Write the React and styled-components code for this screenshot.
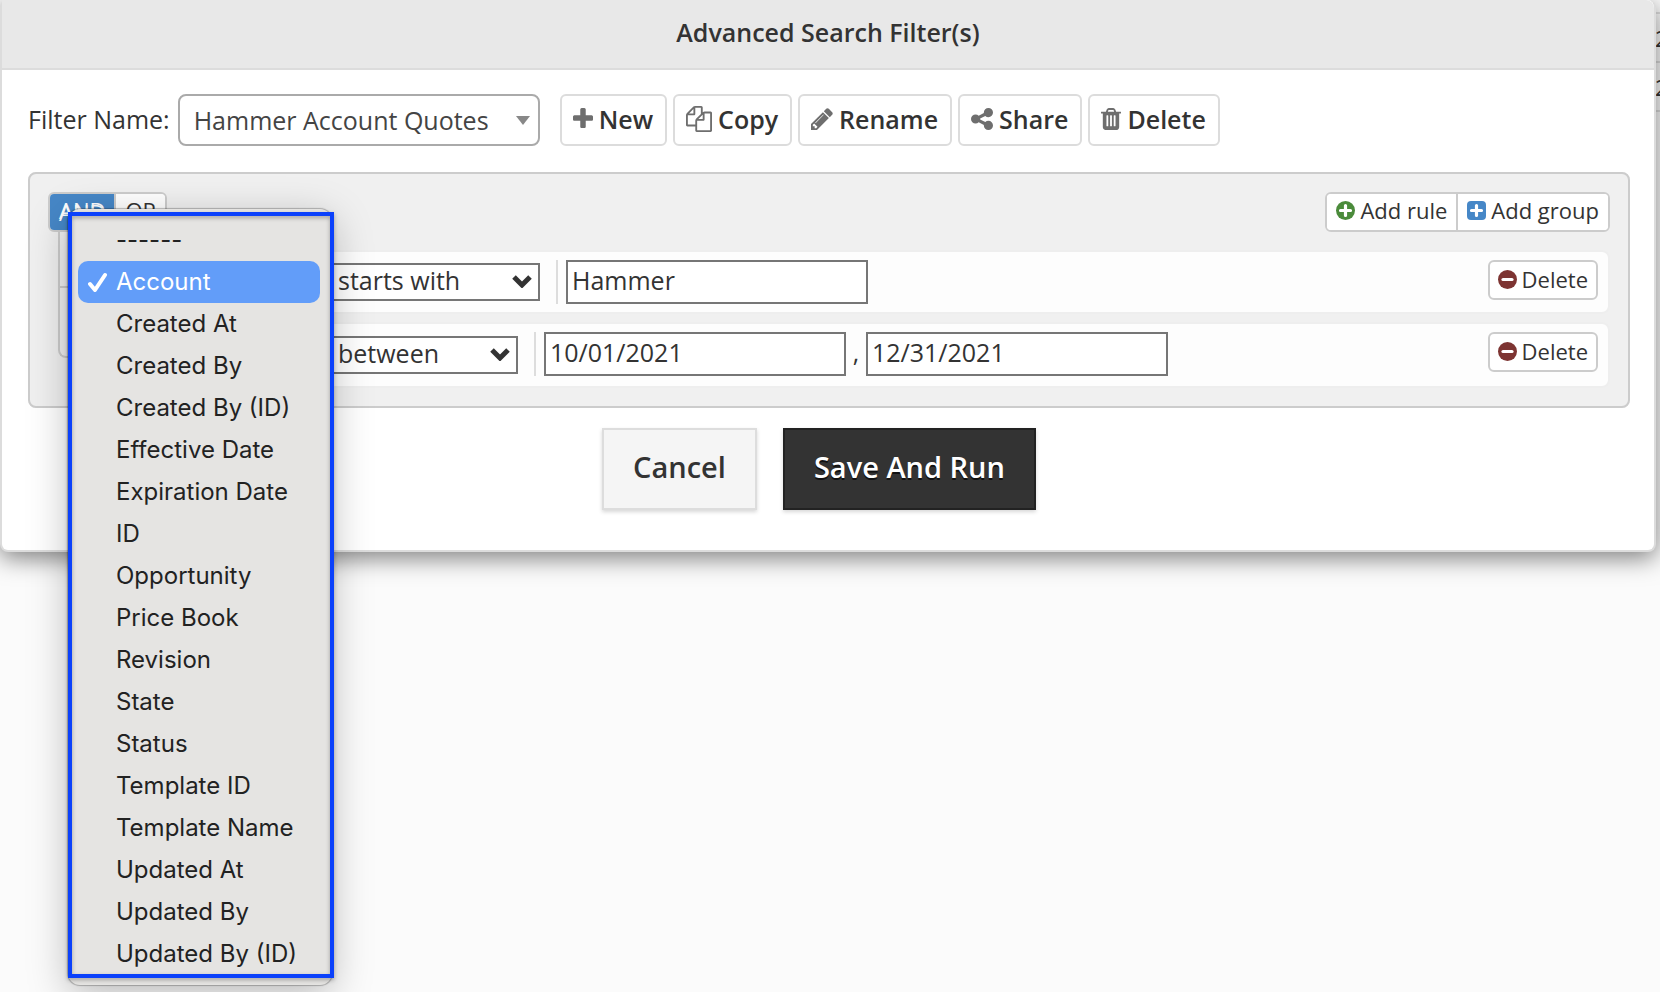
import React from "react";
import styled, { createGlobalStyle, css } from "styled-components";

const GlobalStyle = createGlobalStyle`
  *, *::before, *::after { box-sizing: border-box; }
  body {
    margin: 0;
    background: #fbfbfb;
    color: #333;
    font-family: "Open Sans", "Noto Sans", sans-serif;
    font-size: 25px;
    line-height: 36px;
  }
  button, input, select { font: inherit; color: inherit; margin: 0; }
`;

const Page = styled.div`
  position: relative;
  min-height: 100vh;
  padding-right: 4px;
  overflow: hidden;
`;

const BackgroundColumn = styled.div`
  position: absolute;
  top: 12px;
  left: calc(100% - 5px);
  color: #333;
`;

const BackgroundCell = styled.div`
  height: 49px;
  padding-top: 8px;
  border-top: 2px solid #ddd;
  font-size: 22px;
  line-height: 32px;
`;

const Modal = styled.section`
  position: relative;
  background: #fff;
  border: 2px solid #dcdcdc;
  border-top: 0;
  border-radius: 8px;
  box-shadow: 0 6px 24px rgba(0, 0, 0, 0.5);
`;

const ModalHeader = styled.header`
  height: 70px;
  display: flex;
  align-items: center;
  justify-content: center;
  background: #e8e8e8;
  border-bottom: 2px solid #dcdcdc;
  border-radius: 0 8px 0 0;
  padding-bottom: 4px;
`;

const Title = styled.h1`
  margin: 0;
  font-size: 25px;
  line-height: 36px;
  font-weight: 600;
`;

const ModalBody = styled.div`
  padding: 24px 24px 40px 26px;
`;

const FilterBar = styled.div`
  display: flex;
  gap: 6px;
  margin-bottom: 26px;
`;

const FilterLabel = styled.label`
  padding-top: 7px;
  margin-right: 2px;
  white-space: nowrap;
`;

const SelectFrame = styled.div`
  position: relative;
  width: ${(p) => p.$width}px;
  margin-right: ${(p) => p.$after || 0}px;
  ${(p) => p.$centered && css`align-self: center;`}
`;

const FilterSelect = styled.select`
  appearance: none;
  width: 100%;
  height: 52px;
  padding: 0 40px 0 14px;
  border: 2px solid #aaa;
  border-radius: 8px;
  background: #fff;
  color: #444;
`;

const Caret = styled.svg`
  position: absolute;
  right: 10px;
  top: 22px;
  width: 14px;
  height: 9px;
  fill: #888;
  pointer-events: none;
`;

const ToolButton = styled.button`
  display: flex;
  align-items: flex-start;
  gap: 6px;
  height: 52px;
  padding: 5px 12px 0 11px;
  border: 2px solid #dcdcdc;
  border-radius: 6px;
  background: #fff;
  font-weight: 600;
  white-space: nowrap;
`;

const ToolIcon = styled.svg`
  width: ${(p) => p.$width}px;
  height: 26px;
  margin-top: 5px;
  fill: #6e6e6e;
`;

const RuleGroup = styled.fieldset`
  margin: 0;
  min-width: 0;
  padding: 18px;
  border: 2px solid #ccc;
  border-radius: 8px;
  background: #f0f0f0;
`;

const GroupHeader = styled.div`
  display: flex;
  justify-content: space-between;
  margin-bottom: 18px;
`;

const Segments = styled.div`
  display: flex;
  height: 40px;
  border: 2px solid #ccc;
  border-radius: 6px;
  background: #fff;
  overflow: hidden;
`;

const smallButton = css`
  display: flex;
  align-items: center;
  gap: 5px;
  font-size: 22px;
  line-height: 30px;
  white-space: nowrap;
  background: #fff;
`;

const Segment = styled.button`
  ${smallButton}
  border: 0;
  padding: 0 9px 4px;
  &:not(:first-child) { border-left: 2px solid #ccc; }
  ${(p) => p.$active && css`
    background: #4687c7;
    color: #fff;
    text-shadow: 0 2px 0 #fff;
  `}
`;

const RuleButton = styled.button`
  ${smallButton}
  height: 40px;
  margin-left: auto;
  padding: 0 8px 2px;
  border: 2px solid #ccc;
  border-radius: 6px;
`;

const SmallIcon = styled.svg`
  width: 19px;
  height: 19px;
`;

const RuleList = styled.ul`
  list-style: none;
  margin: 0;
  padding: 0 0 0 30px;
  display: flex;
  flex-direction: column;
  gap: 8px;
`;

const Rule = styled.li`
  position: relative;
  display: flex;
  align-items: flex-start;
  min-height: ${(p) => p.$height}px;
  padding: 8px 10px;
  border: 2px solid #eee;
  border-radius: 8px;
  background: #fdfdfd;

  &::before {
    content: "";
    position: absolute;
    left: -22px;
    top: -20px;
    width: 20px;
    height: calc(50% + 26px);
    border: solid #ccc;
    border-width: 0 0 2px 2px;
  }
  &:not(:first-child)::before {
    top: -36px;
    height: calc(50% + 39px);
    border-bottom-left-radius: 8px;
  }
`;

const RuleSelect = styled.select`
  appearance: none;
  display: block;
  width: 100%;
  height: 38px;
  padding: 0 36px 4px 8px;
  border: 2px solid #767676;
  border-radius: 0;
  background: #fff;
  line-height: 30px;
`;

const Chevron = styled.svg`
  position: absolute;
  right: 8px;
  top: 11px;
  width: 20px;
  height: 14px;
  fill: none;
  stroke: #333;
  stroke-width: 5;
  pointer-events: none;
`;

const ValueGroup = styled.div`
  display: flex;
  height: 44px;
  padding-left: 8px;
  border-left: 2px solid #ddd;
`;

const ValueInput = styled.input`
  width: 302px;
  height: 44px;
  padding: 0 4px 4px;
  border: 2px solid #767676;
  border-radius: 0;
  background: #fff;
`;

const Separator = styled.span`
  width: 20px;
  padding-top: 2px;
  text-align: center;
`;

const Actions = styled.footer`
  display: flex;
  justify-content: center;
  gap: 26px;
  padding: 20px 20px 0 0;
`;

const ActionButton = styled.button`
  height: 82px;
  padding: 0 29px 4px;
  border: 2px solid ${(p) => (p.$primary ? "#222" : "#ddd")};
  background: ${(p) => (p.$primary ? "#333" : "#f5f5f5")};
  color: ${(p) => (p.$primary ? "#fff" : "#333")};
  font-size: 29px;
  font-weight: 600;
  text-shadow: ${(p) => (p.$primary ? "0 2px 0 #111" : "none")};
  box-shadow: 0 2px 4px rgba(0, 0, 0, 0.16);
`;

const Menu = styled.ul`
  position: absolute;
  z-index: 2;
  top: -54px;
  left: -22px;
  width: 264px;
  margin: 0;
  padding: 10px 12px 10px 10px;
  list-style: none;
  border-radius: 12px;
  background: #e5e4e2;
  box-shadow: 0 0 1px 1px rgba(0, 0, 0, 0.25), 0 10px 40px rgba(0, 0, 0, 0.26);
  font-family: Inter, "Liberation Sans", sans-serif;
  font-size: 24px;
  line-height: 42px;
  color: #222;
`;

const MenuItem = styled.li`
  display: flex;
  align-items: center;
  height: 42px;
  padding-left: 38px;
  border-radius: 10px;
  white-space: nowrap;
  ${(p) => p.$selected && css`
    padding-left: 10px;
    background: #629df9;
    color: #fff;
  `}
`;

const Check = styled.svg`
  width: 20px;
  height: 20px;
  margin-right: 8px;
  fill: none;
  stroke: #fff;
  stroke-width: 4;
  stroke-linecap: round;
  stroke-linejoin: round;
`;

const Highlight = styled.div`
  position: absolute;
  inset: 3px -2px 7px 0;
  border: 4px solid #0b41fb;
  filter: drop-shadow(0 2px 2px rgba(0, 0, 0, 0.3));
  pointer-events: none;
`;

const TOOLS = [
  { label: "New", width: 20, box: "192 0 1408 1792", path: "M1600 736v192q0 40-28 68t-68 28h-416v416q0 40-28 68t-68 28h-192q-40 0-68-28t-28-68v-416h-416q-40 0-68-28t-28-68v-192q0-40 28-68t68-28h416v-416q0-40 28-68t68-28h192q40 0 68 28t28 68v416h416q40 0 68 28t28 68z" },
  { label: "Copy", width: 26, box: "0 0 1792 1792", path: "M1696 384q40 0 68 28t28 68v1216q0 40-28 68t-68 28h-960q-40 0-68-28t-28-68v-288h-544q-40 0-68-28t-28-68v-672q0-40 20-88t48-76l408-408q28-28 76-48t88-20h416q40 0 68 28t28 68v328q68-40 128-40h416zm-544 213l-299 299h299v-299zm-640-384l-299 299h299v-299zm196 647l316-316v-416h-384v416q0 40-28 68t-68 28h-416v640h512v-256q0-40 20-88t48-76zm956 804v-1152h-384v416q0 40-28 68t-68 28h-416v640h896z" },
  { label: "Rename", width: 22, box: "128 0 1536 1792", path: "M491 1536l91-91-235-235-91 91v107h128v128h107zm523-928q0-22-22-22-10 0-17 7l-542 542q-7 7-7 17 0 22 22 22 10 0 17-7l542-542q7-7 7-17zm-54-192l416 416-832 832h-416v-416zm683 96q0 53-37 90l-166 166-416-416 166-165q36-38 90-38 53 0 91 38l235 234q37 39 37 91z" },
  { label: "Share", width: 22, box: "128 0 1536 1792", path: "M1344 1024q133 0 226.500 93.500t93.500 226.500-93.500 226.500-226.500 93.500-226.500-93.500-93.500-226.500q0-12 2-34l-360-180q-92 86-218 86-133 0-226.500-93.500t-93.500-226.500 93.500-226.500 226.500-93.500q126 0 218 86l360-180q-2-22-2-34 0-133 93.500-226.500t226.500-93.500 226.500 93.500 93.500 226.500-93.500 226.500-226.500 93.500q-126 0-218-86l-360 180q2 22 2 34t-2 34l360 180q92-86 218-86z" },
  { label: "Delete", width: 20, box: "192 0 1408 1792", path: "M704 1376v-704q0-14-9-23t-23-9h-64q-14 0-23 9t-9 23v704q0 14 9 23t23 9h64q14 0 23-9t9-23zm256 0v-704q0-14-9-23t-23-9h-64q-14 0-23 9t-9 23v704q0 14 9 23t23 9h64q14 0 23-9t9-23zm256 0v-704q0-14-9-23t-23-9h-64q-14 0-23 9t-9 23v704q0 14 9 23t23 9h64q14 0 23-9t9-23zm-544-992h448l-48-117q-7-9-17-11h-317q-10 2-17 11zm928 32v64q0 14-9 23t-23 9h-96v948q0 83-47 143.500t-113 60.500h-832q-66 0-113-58.500t-47-141.500v-952h-96q-14 0-23-9t-9-23v-64q0-14 9-23t23-9h309l70-167q15-37 54-63t79-26h320q40 0 79 26t54 63l70 167h309q14 0 23 9t9 23z" },
];

const FIELDS = [
  "------", "Account", "Created At", "Created By", "Created By (ID)", "Effective Date",
  "Expiration Date", "ID", "Opportunity", "Price Book", "Revision", "State", "Status",
  "Template ID", "Template Name", "Updated At", "Updated By", "Updated By (ID)",
];

function Badge({ shape, color, minus }) {
  return (
    <SmallIcon viewBox="0 0 19 19" aria-hidden="true">
      <rect width="19" height="19" rx={shape === "square" ? 4 : 9.5} fill={color} />
      <path
        d={minus ? "M5 9.5H14" : "M4.500 9.5H14.500M9.500 4.500V14.500"}
        stroke="#fff"
        strokeWidth="3.200"
        strokeLinecap="round"
      />
    </SmallIcon>
  );
}

function Operator({ value, width }) {
  return (
    <SelectFrame $width={width} $after={16} $centered>
      <RuleSelect aria-label="Operator" defaultValue={value}>
        <option>{value}</option>
      </RuleSelect>
      <Chevron viewBox="0 0 20 14" aria-hidden="true">
        <path d="M2 3l8 8 8-8" />
      </Chevron>
    </SelectFrame>
  );
}

function FieldSelect({ value, children }) {
  return (
    <SelectFrame $width={228} $after={10} $centered>
      <RuleSelect aria-label="Field" defaultValue={value}>
        {FIELDS.map((f) => <option key={f}>{f}</option>)}
      </RuleSelect>
      {children}
    </SelectFrame>
  );
}

function FieldMenu({ selected }) {
  return (
    <Menu role="listbox" aria-label="Field">
      {FIELDS.map((f) => (
        <MenuItem key={f} role="option" aria-selected={f === selected} $selected={f === selected}>
          {f === selected && (
            <Check viewBox="0 0 20 20" aria-hidden="true">
              <path d="M2 12l5 6L17 3" />
            </Check>
          )}
          {f}
        </MenuItem>
      ))}
      <Highlight as="li" role="presentation" />
    </Menu>
  );
}

function DeleteRule() {
  return (
    <RuleButton type="button">
      <Badge color="#7d3432" minus />
      Delete
    </RuleButton>
  );
}

export default function App() {
  return (
    <>
      <GlobalStyle />
      <Page>
        <BackgroundColumn aria-hidden="true">
          <BackgroundCell>2</BackgroundCell>
          <BackgroundCell>2</BackgroundCell>
          <BackgroundCell />
        </BackgroundColumn>
        <Modal role="dialog" aria-labelledby="dialog-title">
          <ModalHeader>
            <Title id="dialog-title">Advanced Search Filter(s)</Title>
          </ModalHeader>
          <ModalBody>
            <FilterBar>
              <FilterLabel htmlFor="filter-name">Filter Name:</FilterLabel>
              <SelectFrame $width={362} $after={14}>
                <FilterSelect id="filter-name">
                  <option>Hammer Account Quotes</option>
                </FilterSelect>
                <Caret viewBox="0 0 14 9" aria-hidden="true">
                  <path d="M0 0H14L7 9Z" />
                </Caret>
              </SelectFrame>
              {TOOLS.map((t) => (
                <ToolButton type="button" key={t.label}>
                  <ToolIcon $width={t.width} viewBox={t.box} aria-hidden="true">
                    <path d={t.path} />
                  </ToolIcon>
                  {t.label}
                </ToolButton>
              ))}
            </FilterBar>

            <RuleGroup>
              <GroupHeader>
                <Segments>
                  <Segment type="button" $active>AND</Segment>
                  <Segment type="button">OR</Segment>
                </Segments>
                <Segments>
                  <Segment type="button">
                    <Badge color="#4b8b3b" />
                    Add rule
                  </Segment>
                  <Segment type="button">
                    <Badge shape="square" color="#4687c7" />
                    Add group
                  </Segment>
                </Segments>
              </GroupHeader>
              <RuleList>
                <Rule $height={64}>
                  <FieldSelect value="Account">
                    <FieldMenu selected="Account" />
                  </FieldSelect>
                  <Operator value="starts with" width={212} />
                  <ValueGroup>
                    <ValueInput aria-label="Value" defaultValue="Hammer" />
                  </ValueGroup>
                  <DeleteRule />
                </Rule>
                <Rule $height={66}>
                  <FieldSelect value="Created At" />
                  <Operator value="between" width={190} />
                  <ValueGroup>
                    <ValueInput aria-label="From" defaultValue="10/01/2021" />
                    <Separator>,</Separator>
                    <ValueInput aria-label="To" defaultValue="12/31/2021" />
                  </ValueGroup>
                  <DeleteRule />
                </Rule>
              </RuleList>
            </RuleGroup>

            <Actions>
              <ActionButton type="button">Cancel</ActionButton>
              <ActionButton type="button" $primary>Save And Run</ActionButton>
            </Actions>
          </ModalBody>
        </Modal>
      </Page>
    </>
  );
}
